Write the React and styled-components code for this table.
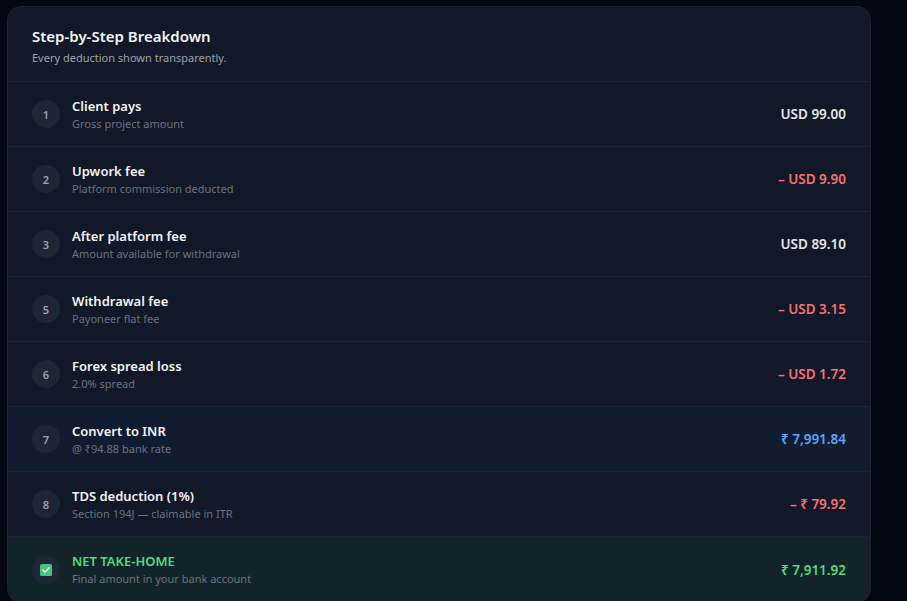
import React from 'react'
import styled, { createGlobalStyle } from 'styled-components'

const GlobalStyle = createGlobalStyle`
  html, body {
    margin: 0;
    padding: 0;
    background: #030712;
  }
  body {
    font-family: "Noto Sans", "Open Sans", sans-serif;
  }
`

const Page = styled.div`
  padding: 6px 36px 0 7px;
  height: 601px;
  box-sizing: border-box;
  overflow: hidden;
`

const Card = styled.div`
  width: 864px;
  background: #111827;
  border: 1px solid #1c2433;
  border-radius: 14px;
  overflow: hidden;
  box-sizing: border-box;
`

const Header = styled.div`
  padding: 18px 24px 15px;
  border-bottom: 1px solid #1c2535;
`

const Title = styled.h2`
  margin: 0;
  font-size: 15px;
  font-weight: 600;
  color: #f3f4f6;
  line-height: 22px;
`

const Subtitle = styled.p`
  margin: 3px 0 0;
  font-size: 11px;
  color: #9ca3af;
  line-height: 16px;
`

const Row = styled.div`
  display: flex;
  align-items: center;
  height: 65px;
  padding: 0 24px;
  box-sizing: border-box;
  border-bottom: 1px solid #1c2535;
  background: ${p =>
    p.$tone === 'convert' ? '#111c30' : p.$tone === 'net' ? '#13232a' : 'transparent'};
  &:last-child {
    border-bottom: none;
  }
`

const Badge = styled.div`
  width: 28px;
  height: 28px;
  border-radius: 50%;
  background: #1e2635;
  color: #9ca3af;
  font-size: 11px;
  font-weight: 600;
  display: flex;
  align-items: center;
  justify-content: center;
  flex-shrink: 0;
`

const Info = styled.div`
  margin-left: 12px;
  flex: 1;
  display: flex;
  flex-direction: column;
`

const Label = styled.div`
  font-size: 13px;
  font-weight: 600;
  line-height: 19px;
  color: ${p => (p.$net ? '#4ade80' : '#f3f4f6')};
`

const Note = styled.div`
  font-size: 11px;
  line-height: 16px;
  color: #6b7280;
`

const Amount = styled.div`
  font-size: 13.5px;
  font-weight: 600;
  color: ${p =>
    p.$kind === 'minus'
      ? '#f87171'
      : p.$kind === 'blue'
      ? '#60a5fa'
      : p.$kind === 'green'
      ? '#4ade80'
      : '#e5e7eb'};
`

function CheckIcon () {
  return (
    <svg width="12" height="12" viewBox="0 0 12 12">
      <rect x="0" y="0" width="12" height="12" rx="1.5" fill="#3fc67c" />
      <path d="M3 6.2 L5.1 8.2 L9 4" stroke="#ffffff" strokeWidth="1.6" fill="none" strokeLinecap="round" strokeLinejoin="round" />
    </svg>
  )
}

const steps = [
  { n: '1', label: 'Client pays', note: 'Gross project amount', value: 'USD 99.00' },
  { n: '2', label: 'Upwork fee', note: 'Platform commission deducted', value: '– USD 9.90', kind: 'minus' },
  { n: '3', label: 'After platform fee', note: 'Amount available for withdrawal', value: 'USD 89.10' },
  { n: '5', label: 'Withdrawal fee', note: 'Payoneer flat fee', value: '– USD 3.15', kind: 'minus' },
  { n: '6', label: 'Forex spread loss', note: '2.0% spread', value: '– USD 1.72', kind: 'minus' },
  { n: '7', label: 'Convert to INR', note: '@ ₹94.88 bank rate', value: '₹ 7,991.84', kind: 'blue', tone: 'convert' },
  { n: '8', label: 'TDS deduction (1%)', note: 'Section 194J — claimable in ITR', value: '– ₹ 79.92', kind: 'minus' }
]

export default function App () {
  return (
    <Page>
      <GlobalStyle />
      <Card>
        <Header>
          <Title>Step-by-Step Breakdown</Title>
          <Subtitle>Every deduction shown transparently.</Subtitle>
        </Header>
        {steps.map(s => (
          <Row key={s.n} $tone={s.tone}>
            <Badge>{s.n}</Badge>
            <Info>
              <Label>{s.label}</Label>
              <Note>{s.note}</Note>
            </Info>
            <Amount $kind={s.kind}>{s.value}</Amount>
          </Row>
        ))}
        <Row $tone="net">
          <Badge><CheckIcon /></Badge>
          <Info>
            <Label $net>NET TAKE-HOME</Label>
            <Note>Final amount in your bank account</Note>
          </Info>
          <Amount $kind="green">₹ 7,911.92</Amount>
        </Row>
      </Card>
    </Page>
  )
}
